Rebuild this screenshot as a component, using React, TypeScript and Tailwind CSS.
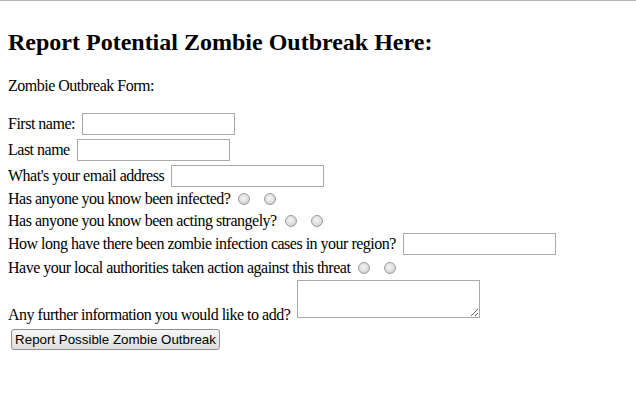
const serif = { fontFamily: '"Liberation Serif", "Times New Roman", serif' }

function TextBox({ className = "" }: { className?: string }) {
  return (
    <input
      type="text"
      className={`ml-[7px] h-[22px] w-[153px] border border-[#a9a9a9] bg-white px-1 outline-none ${className}`}
    />
  )
}

function Radio({ first = false }: { first?: boolean }) {
  return (
    <span
      className={`inline-block h-[12px] w-[12px] shrink-0 rounded-full border border-[#9c9c9c] bg-[radial-gradient(circle_at_45%_40%,#f4f4f4_0%,#dedede_55%,#bdbdbd_100%)] ${
        first ? "ml-[8px]" : "ml-[14px]"
      }`}
    />
  )
}

function Row({ h, children }: { h: number; children: React.ReactNode }) {
  return (
    <div className="flex items-center whitespace-pre" style={{ height: h }}>
      {children}
    </div>
  )
}

export default function App() {
  return (
    <div className="min-h-[409px] w-full border-t border-[#b4b4b4] bg-white pl-[8px] text-[16px] text-black" style={serif}>
      <h2 className="mt-[27px] text-[24px] font-bold leading-[28px]">Report Potential Zombie Outbreak Here:</h2>
      <p className="mt-[21px] leading-[18px] tracking-[-0.5px]">Zombie Outbreak Form:</p>

      <form className="mt-[16px] leading-[18px] tracking-[-0.5px]" onSubmit={(e) => e.preventDefault()}>
        <Row h={26}>
          <span>First name:</span>
          <TextBox />
        </Row>
        <Row h={26}>
          <span>Last name</span>
          <TextBox />
        </Row>
        <Row h={25}>
          <span>What's your email address</span>
          <TextBox />
        </Row>
        <Row h={22}>
          <span>Has anyone you know been infected?</span>
          <Radio first />
          <Radio />
        </Row>
        <Row h={21}>
          <span>Has anyone you know been acting strangely?</span>
          <Radio first />
          <Radio />
        </Row>
        <Row h={25}>
          <span>How long have there been zombie infection cases in your region?</span>
          <TextBox />
        </Row>
        <Row h={24}>
          <span>Have your local authorities taken action against this threat</span>
          <Radio first />
          <Radio />
        </Row>
        <div className="flex items-end">
          <span>Any further information you would like to add?</span>
          <textarea className="mb-[6px] ml-[7px] h-[38px] w-[183px] resize border border-[#a9a9a9] bg-white outline-none" />
        </div>
        <div className="mt-[5px] pl-[3px] tracking-normal">
          <button
            type="submit"
            className="h-[21px] w-[209px] rounded-[3px] border border-[#8f8f8f] bg-[linear-gradient(#f6f6f6,#dddddd)] text-[13.33px] leading-[19px] text-black"
            style={{ fontFamily: '"Liberation Sans", Arial, sans-serif' }}
          >
            Report Possible Zombie Outbreak
          </button>
        </div>
      </form>
    </div>
  )
}
